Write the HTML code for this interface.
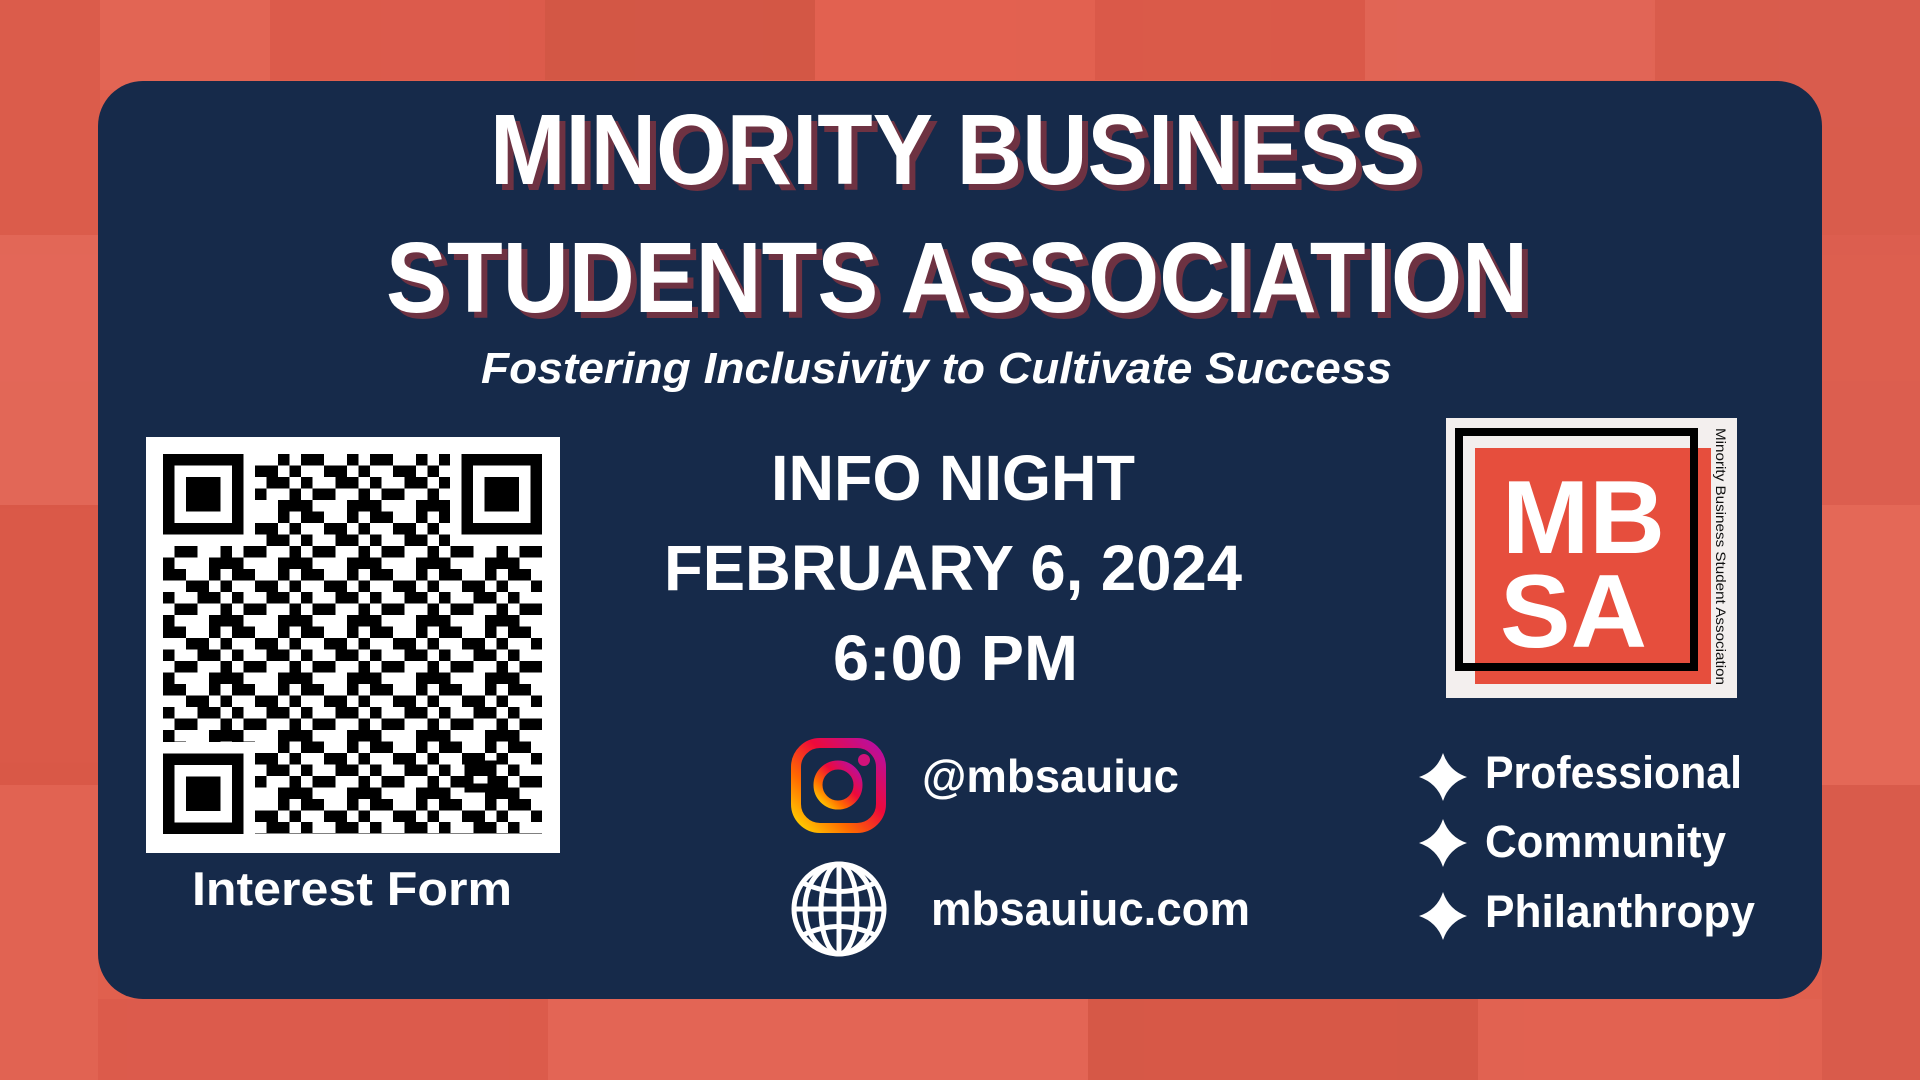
<!DOCTYPE html>
<html><head><meta charset="utf-8"><style>
html,body{margin:0;padding:0;width:1920px;height:1080px;overflow:hidden;background:#e0604e}
svg{display:block}
text{font-family:"Liberation Sans",sans-serif;font-weight:bold}
</style></head><body>
<svg width="1920" height="1080" viewBox="0 0 1920 1080" xmlns="http://www.w3.org/2000/svg">
<defs>
<linearGradient id="ig" x1="0" y1="1" x2="1" y2="0">
<stop offset="0" stop-color="#ffd600"/><stop offset="0.3" stop-color="#ff6a00"/><stop offset="0.6" stop-color="#ee0a3a"/><stop offset="1" stop-color="#b40fa8"/>
</linearGradient>
<pattern id="qr" x="163" y="454" width="69" height="57.5" patternUnits="userSpaceOnUse">
<path fill="#000" d="M0 0h23v11.5H0zM46 0h11.5v11.5H46zM23 11.5h23v11.5H23zM57.5 11.5H69v11.5H57.5zM0 23h11.5v11.5H0zM34.5 23h23v11.5h-23zM11.5 34.5h23v11.5h-23zM57.5 34.5H69v11.5H57.5zM0 46h11.5v11.5H0zM46 46h23v11.5H46z"/>
</pattern>
</defs>
<rect width="1920" height="1080" fill="#e0604e"/>
<g opacity="0.55">
<rect x="0" y="0" width="100" height="235" fill="#d85a4a"/>
<rect x="100" y="0" width="170" height="90" fill="#e46a5a"/>
<rect x="270" y="0" width="275" height="80" fill="#d9584a"/>
<rect x="545" y="0" width="270" height="80" fill="#c9503f"/>
<rect x="815" y="0" width="280" height="80" fill="#e56252"/>
<rect x="1095" y="0" width="270" height="80" fill="#d65545"/>
<rect x="1365" y="0" width="290" height="80" fill="#e26a5c"/>
<rect x="1655" y="0" width="265" height="235" fill="#d45a4c"/>
<rect x="0" y="235" width="98" height="270" fill="#e56d60"/>
<rect x="0" y="505" width="98" height="280" fill="#d55343"/>
<rect x="0" y="785" width="98" height="295" fill="#e36656"/>
<rect x="1822" y="235" width="98" height="270" fill="#da5e50"/>
<rect x="1822" y="505" width="98" height="280" fill="#e8705f"/>
<rect x="1822" y="785" width="98" height="295" fill="#d45849"/>
<rect x="98" y="999" width="450" height="81" fill="#d9584a"/>
<rect x="548" y="999" width="540" height="81" fill="#e66a5b"/>
<rect x="1088" y="999" width="390" height="81" fill="#cf5242"/>
<rect x="1478" y="999" width="344" height="81" fill="#e36454"/>
</g>
<rect x="98" y="81" width="1724" height="918" rx="45" fill="#162a4a"/>
<g font-size="100">
<text x="496" y="190" textLength="930" lengthAdjust="spacingAndGlyphs" fill="#6e3242">MINORITY BUSINESS</text>
<text x="490" y="184" textLength="930" lengthAdjust="spacingAndGlyphs" fill="#fff">MINORITY BUSINESS</text>
<text x="392" y="318" textLength="1142" lengthAdjust="spacingAndGlyphs" fill="#6e3242">STUDENTS ASSOCIATION</text>
<text x="386" y="312" textLength="1142" lengthAdjust="spacingAndGlyphs" fill="#fff">STUDENTS ASSOCIATION</text>
</g>
<text x="481" y="383" font-size="44" font-style="italic" textLength="911" lengthAdjust="spacingAndGlyphs" fill="#fff">Fostering Inclusivity to Cultivate Success</text>
<rect x="146" y="437" width="414" height="416" fill="#fff"/>
<rect x="163" y="454" width="379" height="380" fill="url(#qr)"/>
<g>
<rect x="163" y="454" width="92" height="92" fill="#fff"/>
<rect x="450" y="454" width="92" height="92" fill="#fff"/>
<rect x="163" y="742" width="92" height="92" fill="#fff"/>
<g fill="none" stroke="#000" stroke-width="11.5">
<rect x="168.75" y="459.75" width="69" height="69"/>
<rect x="467.25" y="459.75" width="69" height="69"/>
<rect x="168.75" y="759.25" width="69" height="69"/>
<rect x="469" y="765" width="23" height="23" stroke-width="9"/>
</g>
<rect x="186" y="477" width="34.5" height="34.5" fill="#000"/>
<rect x="484.5" y="477" width="34.5" height="34.5" fill="#000"/>
<rect x="186" y="776.5" width="34.5" height="34.5" fill="#000"/>
</g>
<text x="192" y="905" font-size="47" textLength="320" lengthAdjust="spacingAndGlyphs" fill="#fff">Interest Form</text>
<g font-size="64" fill="#fff">
<text x="771" y="500" textLength="364" lengthAdjust="spacingAndGlyphs">INFO NIGHT</text>
<text x="664" y="590" textLength="578" lengthAdjust="spacingAndGlyphs">FEBRUARY 6, 2024</text>
<text x="833" y="680" textLength="245" lengthAdjust="spacingAndGlyphs">6:00 PM</text>
</g>
<rect x="796" y="743" width="85" height="85" rx="24" fill="none" stroke="url(#ig)" stroke-width="10"/>
<circle cx="838" cy="785" r="20" fill="none" stroke="url(#ig)" stroke-width="9"/>
<circle cx="864" cy="760" r="6" fill="#d2127a"/>
<text x="922" y="792" font-size="46" textLength="257" lengthAdjust="spacingAndGlyphs" fill="#fff">@mbsauiuc</text>
<g fill="none" stroke="#fff" stroke-width="5">
<circle cx="839" cy="909" r="45"/>
<ellipse cx="839" cy="909" rx="18" ry="45"/>
<ellipse cx="839" cy="909" rx="34" ry="45"/>
<line x1="839" y1="864" x2="839" y2="954"/>
<line x1="794" y1="909" x2="884" y2="909"/>
<path d="M803 883 Q839 900 875 883"/>
<path d="M803 935 Q839 918 875 935"/>
</g>
<text x="931" y="925" font-size="47" textLength="319" lengthAdjust="spacingAndGlyphs" fill="#fff">mbsauiuc.com</text>
<rect x="1446" y="418" width="291" height="280" fill="#f3efee"/>
<rect x="1475" y="448" width="236" height="236" fill="#e64e3d"/>
<rect x="1459" y="432" width="235" height="235" fill="none" stroke="#000" stroke-width="8"/>
<text x="1502" y="553" font-size="104" textLength="163" lengthAdjust="spacingAndGlyphs" fill="#fff">MB</text>
<text x="1500" y="647" font-size="104" textLength="147" lengthAdjust="spacingAndGlyphs" fill="#fff">SA</text>
<text transform="translate(1716,428) rotate(90)" font-size="14" style="font-weight:normal" textLength="257" lengthAdjust="spacingAndGlyphs" fill="#111">Minority Business Student Association</text>
<g fill="#fff">
<path d="M1443 753 Q1449 771 1467 777 Q1449 783 1443 801 Q1437 783 1419 777 Q1437 771 1443 753Z"/>
<path d="M1443 819 Q1449 837 1467 843 Q1449 849 1443 867 Q1437 849 1419 843 Q1437 837 1443 819Z"/>
<path d="M1443 892 Q1449 910 1467 916 Q1449 922 1443 940 Q1437 922 1419 916 Q1437 910 1443 892Z"/>
</g>
<g font-size="45" fill="#fff">
<text x="1485" y="788" textLength="257" lengthAdjust="spacingAndGlyphs">Professional</text>
<text x="1485" y="857" textLength="241" lengthAdjust="spacingAndGlyphs">Community</text>
<text x="1485" y="927" textLength="270" lengthAdjust="spacingAndGlyphs">Philanthropy</text>
</g>
</svg>
</body></html>
